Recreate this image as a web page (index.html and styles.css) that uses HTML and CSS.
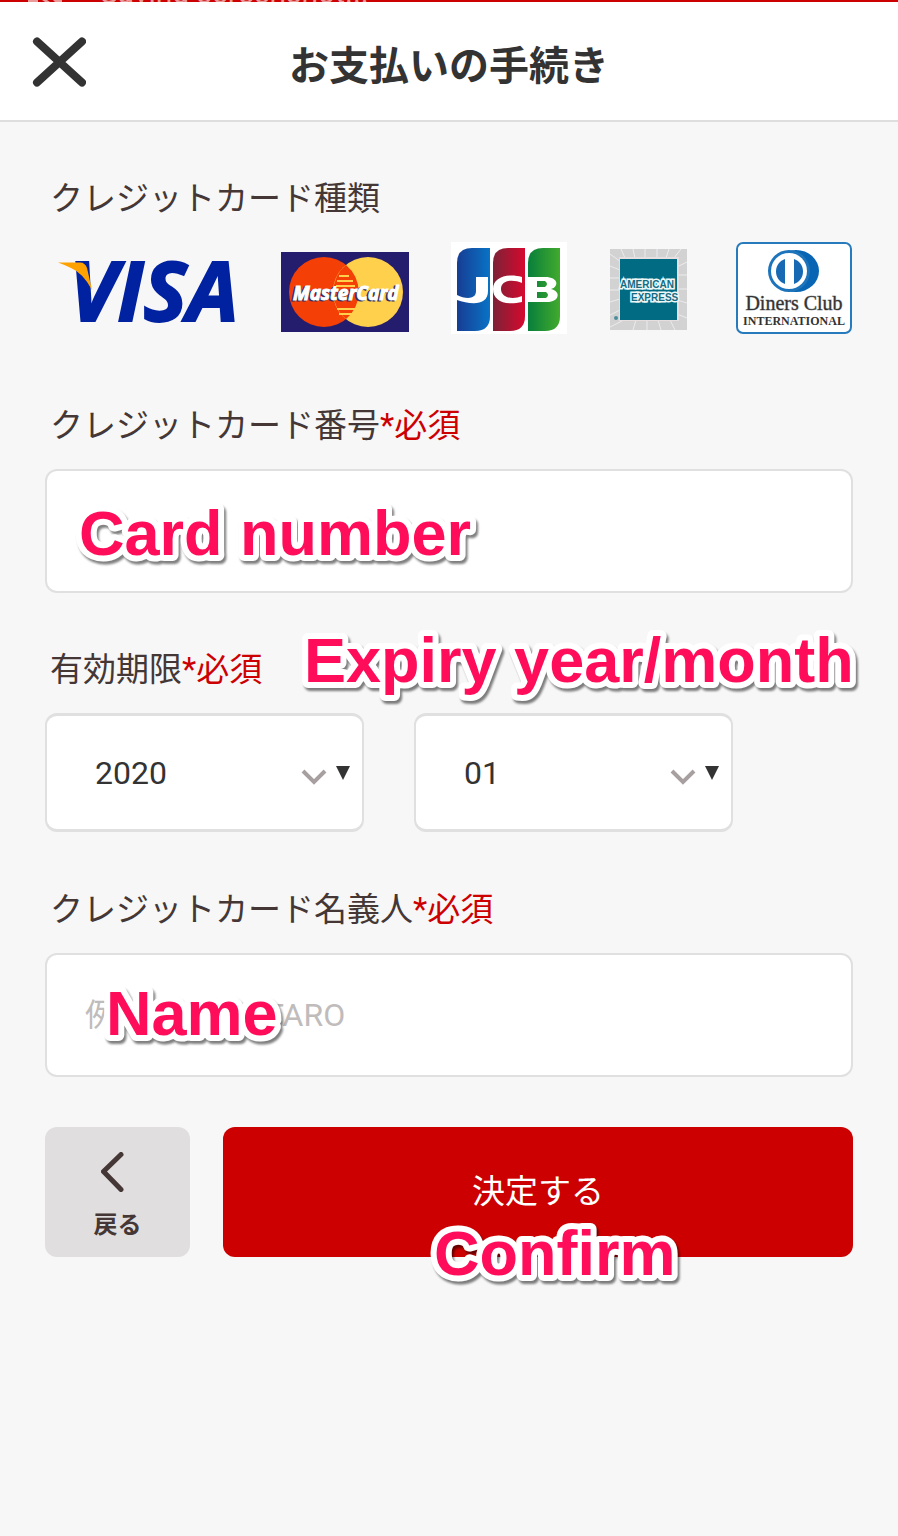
FILE: index.html
```html
<!DOCTYPE html>
<html lang="ja">
<head>
<meta charset="utf-8">
<meta name="viewport" content="width=device-width, initial-scale=1">
<title>お支払いの手続き</title>
<link rel="stylesheet" href="styles.css">
</head>
<body>
<div class="status"><svg class="status-icon" viewBox="0 0 36 2" aria-hidden="true"><path d="M0 0h10v2H0zM14 0h5l3 2h-5zM25 0h9v2h-7z"/></svg><span>Saving screenshot...</span></div>
<header class="header">
  <button class="close" type="button" aria-label="閉じる">
    <svg viewBox="0 0 54 50" aria-hidden="true"><path d="M5 4.500L50 45.500M50 4.500L5 45.500"/></svg>
  </button>
  <h1 class="title">お支払いの手続き</h1>
</header>
<main>
  <form class="form">
    <section class="brands-group">
      <h2 class="label">クレジットカード種類</h2>
      <div class="brands">
        <svg class="logo visa" viewBox="0 0 181 92" role="img" aria-label="VISA">
          <text class="visa-text" x="11" y="79">VISA</text>
          <path d="M0 20.500H22Q27 20.500 29 26L34 48Q25 31 13 26Q7 23 0 20.500Z" fill="#ffa200"/>
        </svg>
        <svg class="logo mastercard" viewBox="0 0 128 92" role="img" aria-label="MasterCard">
          <path d="M0 10H128V90H0Z" fill="#241c6c"/>
          <circle cx="43" cy="50" r="35" fill="#f43f06"/>
          <circle cx="87" cy="50" r="35" fill="#ffd04b"/>
          <path d="M65 23A35 35 0 0 0 65 77A35 35 0 0 0 65 23Z" fill="#f43f06"/>
          <path d="M58 34H68M56 39H72M55 44H74M56 67H74M58 72H71" stroke="#ffd04b" stroke-width="2"/>
          <text class="mc-text mc-shade" x="10" y="59">MasterCard</text>
          <text class="mc-text" x="12" y="58">MasterCard</text>
        </svg>
        <svg class="logo jcb" viewBox="0 0 116 92" role="img" aria-label="JCB">
          <defs>
            <linearGradient id="jb"><stop stop-color="#173d94"/><stop offset="1" stop-color="#0873c5"/></linearGradient>
            <linearGradient id="jr"><stop stop-color="#7c2236"/><stop offset="1" stop-color="#d6092f"/></linearGradient>
            <linearGradient id="jg"><stop stop-color="#087f3b"/><stop offset="1" stop-color="#42aa2d"/></linearGradient>
          </defs>
          <path d="M0 0H116V92H0Z" fill="#fff"/>
          <path d="M6 21Q6 6 21 6H39V74Q39 89 24 89H6Z" fill="url(#jb)"/>
          <path d="M42 21Q42 6 57 6H74V74Q74 89 59 89H42Z" fill="url(#jr)"/>
          <path d="M77 21Q77 6 92 6H109V74Q109 89 94 89H77Z" fill="url(#jg)"/>
          <path d="M25 35H37V49C37 65 18 62 6 58V53C14 57 25 58 25 49Z" fill="#fff"/>
          <path d="M71 35V41C62 37 50 38 50 47S62 58 71 54V60C54 64 42 59 42 47S57 31 71 35Z" fill="#fff"/>
          <path fill-rule="evenodd" d="M77 35H94C108 35 108 45 100 47C110 49 109 60 96 60H77ZM86 39V45H94Q98 42 94 39ZM86 50V56H95Q99 53 95 50Z" fill="#fff"/>
        </svg>
        <svg class="logo amex" viewBox="0 0 78 92" role="img" aria-label="American Express">
          <path d="M1 7H78V88H1Z" fill="#d2d2d3"/>
          <path d="M1 12L12 20M1 24L11 28M1 36H11M1 48H11M1 60L11 57M1 73L11 68M1 85L13 79M12 7L16 16M24 7L26 16M36 7V16M48 7V16M60 7L57 16M72 7L65 16M78 20L68 25M78 33H68M78 47H68M78 61L68 58M78 76L68 72M66 88L61 78M52 88L49 78M38 88V78M24 88L27 78" stroke="#ececee"/>
          <path d="M10 15H70V79H10Z" fill="#e7dfdf"/>
          <path d="M11 17H68V78H11Z" fill="#006b82"/>
          <text class="amex-text" x="11" y="46">AMERICAN</text>
          <text class="amex-text" x="22" y="59">EXPRESS</text>
          <circle cx="7" cy="76" r="2" fill="#4d8c9d"/>
        </svg>
        <svg class="logo diners" viewBox="0 0 124 92" role="img" aria-label="Diners Club International">
          <rect x="8" y="1" width="114" height="90" rx="6" fill="#fff" stroke="#277bbd" stroke-width="2"/>
          <ellipse cx="67" cy="29" rx="23" ry="21" fill="#0865b3"/>
          <circle cx="60" cy="29" r="21" fill="#1d74ba"/>
          <circle cx="60" cy="29" r="18" fill="#fff"/>
          <path d="M56 17V42C44 38 44 21 56 17ZM65 17V42C77 38 77 21 65 17Z" fill="#1769b4"/>
          <text class="diners-name" x="65" y="68" text-anchor="middle">Diners Club</text>
          <text class="diners-sub" x="65" y="83" text-anchor="middle">INTERNATIONAL</text>
        </svg>
      </div>
    </section>

    <div class="group">
      <label class="label" for="number">クレジットカード番号<span class="required">*必須</span></label>
      <div class="field">
        <input class="input" id="number" type="text" inputmode="numeric">
        <svg class="note note-number"><text x="0" y="53">Card number</text></svg>
      </div>
    </div>

    <div class="group" role="group" aria-labelledby="expiry">
      <div class="label" id="expiry">有効期限<span class="required">*必須</span></div>
      <div class="selects">
        <div class="select-wrap">
          <select class="select" aria-label="有効期限 年"><option>2020</option><option>2021</option><option>2022</option></select>
          <svg class="arrows" viewBox="0 0 50 20" aria-hidden="true"><path d="M2 6L13 17L24 6" fill="none" stroke="#a8a0a0" stroke-width="4"/><path d="M35 1H49L42 15Z" fill="#333"/></svg>
        </div>
        <div class="select-wrap">
          <select class="select" aria-label="有効期限 月"><option>01</option><option>02</option><option>03</option></select>
          <svg class="arrows" viewBox="0 0 50 20" aria-hidden="true"><path d="M2 6L13 17L24 6" fill="none" stroke="#a8a0a0" stroke-width="4"/><path d="M35 1H49L42 15Z" fill="#333"/></svg>
        </div>
      </div>
      <svg class="note note-expiry"><text x="0" y="53">Expiry year/month</text></svg>
    </div>

    <div class="group">
      <label class="label" for="name">クレジットカード名義人<span class="required">*必須</span></label>
      <div class="field">
        <input class="input" id="name" type="text" placeholder="例)YAMADA TARO">
        <svg class="note note-name"><text x="0" y="53">Name</text></svg>
      </div>
    </div>

    <div class="actions">
      <button class="back" type="button">
        <svg class="back-icon" viewBox="0 0 34 40" aria-hidden="true"><path d="M20 2.500L2.500 19.500L20 37.500"/></svg>
        <span>戻る</span>
      </button>
      <div class="confirm-wrap">
        <button class="confirm" type="submit">決定する</button>
        <svg class="note note-confirm"><text x="0" y="53">Confirm</text></svg>
      </div>
    </div>
  </form>
</main>
</body>
</html>
```

FILE: styles.css
```css
* { box-sizing: border-box; }

body {
  margin: 0;
  background: #f7f7f7;
  color: #443736;
  font-family: Roboto, "Noto Sans CJK JP", sans-serif;
}

button, input, select { font: inherit; color: inherit; margin: 0; }

.status {
  display: flex;
  align-items: flex-end;
  gap: 36px;
  height: 2px;
  padding-left: 28px;
  overflow: hidden;
  background: #c00;
  color: #eb9a9a;
  font-size: 30px;
  line-height: 18px;
  white-space: nowrap;
}

.status-icon { flex: none; width: 36px; height: 2px; fill: #eb9a9a; }

.header {
  display: grid;
  grid-template-columns: 54px 1fr 54px;
  align-items: center;
  height: 120px;
  padding: 2px 32px 0;
  background: #fff;
  border-bottom: 2px solid #dedede;
}

.close { padding: 0; border: 0; background: none; }
.close svg { display: block; width: 54px; height: 50px; }
.close path { fill: none; stroke: #333; stroke-width: 8; stroke-linecap: round; }

.title {
  margin: 0;
  padding-top: 10px;
  color: #333;
  font-size: 40px;
  line-height: 56px;
  font-weight: 700;
  text-align: center;
}

.form {
  display: flex;
  flex-direction: column;
  gap: 53px;
  padding: 53px 45px;
}

.label {
  display: block;
  margin: 0 0 19px;
  padding-left: 5px;
  font-size: 33px;
  line-height: 48px;
  font-weight: 400;
}

.required { color: #c00; }

.brands-group { padding-bottom: 15px; }
.brands { display: flex; gap: 42px; padding-left: 13px; }
.logo { display: block; flex: 0 1 auto; min-width: 0; height: 92px; }
.visa { width: 181px; }
.mastercard { width: 128px; }
.jcb { width: 116px; }
.amex { width: 78px; }
.diners { width: 124px; }

.visa-text { font: italic 700 82px "Open Sans", "Noto Sans", sans-serif; fill: #0022a0; stroke: #0022a0; stroke-width: 2px; }
.mc-text { font: italic 700 19px "Open Sans", "Liberation Sans", sans-serif; fill: #fff; stroke: #fff; stroke-width: 1px; }
.mc-shade { fill: #34305e; stroke: #34305e; }
.amex-text {
  font: 700 10px "Liberation Sans", sans-serif;
  fill: #146c82;
  stroke: #eef7f8;
  stroke-width: 3px;
  paint-order: stroke fill;
}
.diners-name { font: 20px "Liberation Serif", serif; fill: #333; stroke: #333; stroke-width: 1px; stroke-opacity: .4; }
.diners-sub { font: 700 12px "Liberation Serif", serif; fill: #333; }

.group, .field, .select-wrap, .confirm-wrap { position: relative; }

.input, .select {
  display: block;
  width: 100%;
  background: #fff;
  border: 2px solid #e0e0e0;
  border-radius: 12px;
  outline: 0;
}

.input { height: 124px; padding: 0 38px; font-size: 32px; }
.input::placeholder { color: #c0bcbc; opacity: 1; }

.selects { display: flex; gap: 50px; padding-bottom: 1px; }
.select-wrap { flex: 0 1 319px; }
.select {
  height: 119px;
  padding: 0 100px 0 48px;
  border-top-width: 3px;
  border-bottom-width: 3px;
  color: #333;
  font-size: 32px;
  appearance: none;
}
.arrows {
  position: absolute;
  right: 13px;
  top: 52px;
  width: 50px;
  height: 20px;
  pointer-events: none;
}

.actions { display: flex; gap: 33px; margin-top: -3px; }

.back, .confirm { height: 130px; border: 0; border-radius: 12px; }

.back {
  display: flex;
  flex: 0 0 145px;
  flex-direction: column;
  align-items: center;
  gap: 17px;
  padding: 25px 0 0;
  background: #e0dedf;
  font-size: 24px;
  line-height: 32px;
  font-weight: 700;
}
.back-icon { width: 34px; height: 40px; }
.back-icon path { fill: none; stroke: #443736; stroke-width: 5; stroke-linecap: round; stroke-linejoin: round; }

.confirm-wrap { flex: 1; }
.confirm { display: block; width: 100%; padding: 0 0 6px; background: #c00; color: #fff; font-size: 33px; }

.note {
  position: absolute;
  height: 63px;
  overflow: visible;
  pointer-events: none;
  filter: drop-shadow(2px 3px 1px rgba(0, 0, 0, .5));
}
.note text {
  fill: #ff0d5a;
  font: 700 63px "Liberation Sans", sans-serif;
  stroke: #fff;
  stroke-width: 12px;
  stroke-linejoin: round;
  paint-order: stroke fill;
}
.note-number { left: 34px; top: 33px; width: 400px; }
.note-expiry { left: 259px; top: -17px; width: 548px; }
.note-name { left: 61px; top: 29px; width: 170px; }
.note-confirm { left: 211px; top: 95px; width: 242px; }
```
